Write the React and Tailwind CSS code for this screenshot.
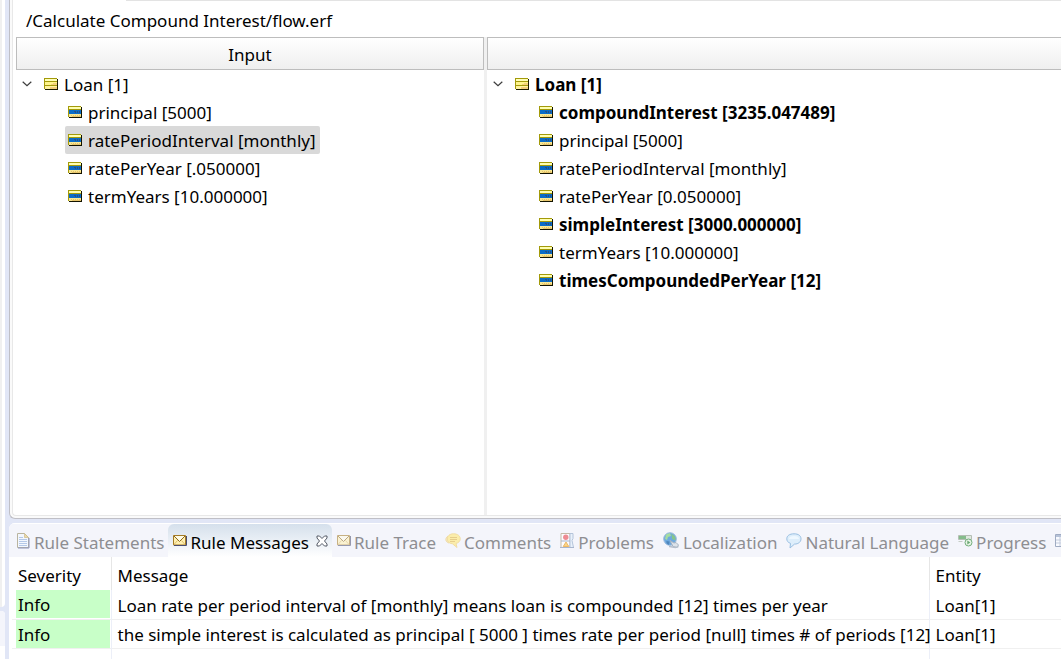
import React from "react";

function EntityIcon() {
  return (
    <svg width="14" height="12" viewBox="0 0 14 12" shapeRendering="crispEdges" className="shrink-0" aria-hidden="true">
      <path d="M1 1h13v11H1z" fill="#1c1c00" />
      <path d="M0 0h13v11H0z" fill="#a39a0a" />
      <path d="M1 1h12v2H1z" fill="#ffffb8" />
      <path d="M1 4h12v3H1z" fill="#fff58c" />
      <path d="M1 8h12v3H1z" fill="#fff3a0" />
      <path d="M7 6h6v1H7zM6 9h7v2H6zM9 5h4v1H9z" fill="#f3cf7c" />
    </svg>
  );
}

function AttributeIcon() {
  return (
    <svg width="14" height="12" viewBox="0 0 14 12" shapeRendering="crispEdges" className="shrink-0" aria-hidden="true">
      <path d="M1 1h13v11H1z" fill="#141400" />
      <path d="M0 0h13v11H0z" fill="#a39a0a" />
      <path d="M1 1h12v2H1z" fill="#ffffb0" />
      <path d="M1 4h12v4H1z" fill="#0a6cc8" />
      <path d="M6 5h2v1H6zM9 5h1v1H9zM11 5h1v1h-1zM7 6h1v1H7zM9 6h1v1H9zM11 6h1v1h-1z" fill="#2b4f80" />
      <path d="M1 8h12v3H1z" fill="#f8e794" />
      <path d="M3 9h1v1H3zM5 9h1v1H5zM7 9h1v1H7zM9 9h1v1H9zM11 9h1v1h-1zM4 10h9v1H4z" fill="#e6c46c" />
    </svg>
  );
}

function Chevron() {
  return (
    <svg width="10" height="6" viewBox="0 0 10 6" fill="none" stroke="#3c3c3c" strokeWidth="1.2" aria-hidden="true">
      <path d="M.7.8 5 4.8 9.3.8" />
    </svg>
  );
}

function PageIcon() {
  return (
    <svg width="14" height="16" viewBox="0 0 14 16" className="shrink-0" aria-hidden="true">
      <path d="M.5.500h7l4 4v10H.5z" fill="#f3f7fe" stroke="#b9b49f" />
      <path d="M12 5v10H1" fill="none" stroke="#8b94bd" />
      <path d="M7.500.5v4h4z" fill="#ecd9a8" stroke="#cdbb8c" strokeWidth=".7" />
      <path d="M2 4.500h4M2 6.500h8M2 8.500h8M2 10.500h8M2 12.500h8" stroke="#b4c8e8" />
    </svg>
  );
}

function MailIcon({ faded }) {
  return (
    <svg width="14" height="12" viewBox="0 0 14 12" className={faded ? "shrink-0 opacity-55" : "shrink-0"} aria-hidden="true">
      <path d="M.5.5h12v9.500H.5z" fill="#fff0b0" stroke="#a47b24" />
      <path d="M1 10.500h12.500V1" fill="none" stroke="#4a4e70" />
      <path d="M1 1l5.500 5.500L12 1" fill="#fffbe4" stroke="#8c6820" />
      <path d="M1 9.500l3.500-4M12 9.500l-3.500-4" fill="none" stroke="#d4b25c" strokeWidth=".8" />
    </svg>
  );
}

function CommentIcon() {
  return (
    <svg width="16" height="16" viewBox="0 0 16 16" className="shrink-0" aria-hidden="true">
      <path d="M3 3C0 5 0 9 4 10" fill="#f8ebc0" stroke="#ecd9a8" />
      <path d="M8.500.8c4 0 6.700 2 6.700 5 0 2.500-1.700 4-4.200 4.700l1 4-4.500-3.700C4 10.500 2.300 8.500 2.300 6 2.300 3 4.700.8 8.500.8z" fill="#fbedaa" stroke="#f0dca2" />
      <path d="M5 4.500h7M5 6.500h7M5 8.500h5" stroke="#e6cd8c" />
    </svg>
  );
}

function ProblemsIcon() {
  return (
    <svg width="15" height="16" viewBox="0 0 15 16" className="shrink-0" aria-hidden="true">
      <path d="M1 .5h9v14H1z" fill="#fdfcff" stroke="#c3b9a6" />
      <path d="M10 .5h3v5l-1 2 1.500 7H10z" fill="#e9f1fb" stroke="#b4c4da" />
      <path d="M1 8h9M0 14.500h14" stroke="#a8b5cd" />
      <circle cx="5.800" cy="4.300" r="2.700" fill="#ee8b92" />
      <path d="M6 9l2.800 4.500H3.200z" fill="#fad486" stroke="#edb865" />
    </svg>
  );
}

function GlobeIcon() {
  return (
    <svg width="17" height="17" viewBox="0 0 17 17" className="shrink-0" aria-hidden="true">
      <circle cx="7" cy="7" r="6.300" fill="#6da9df" stroke="#9bb9dc" />
      <path d="M3 2.500l4-1.500 1 3-3 1-1 3-2-1z" fill="#a5dca0" />
      <path d="M8.500 1.500l3.500 3 .7 4-3.700-1.500z" fill="#86c48c" />
      <path d="M3.500 9l3 .5-.5 3.500C4 12 3 11 3.500 9z" fill="#4f86bc" />
      <path d="M7 8.500l4 2.500 2-.5 2.500 2.500-1.500 2.500-4-1z" fill="#dde3ea" stroke="#a6b2c0" />
      <path d="M6 14.500c3-.5 6 2.500 9.500 0" fill="none" stroke="#b4bdca" strokeWidth="1.500" />
    </svg>
  );
}

function BubbleIcon() {
  return (
    <svg width="16" height="16" viewBox="0 0 16 16" className="shrink-0" aria-hidden="true">
      <path d="M8 .8c4.500 0 7 2 7 5s-2.500 5.300-6.500 5.300L4 15l.5-4.600C2 9.500.8 8 .8 5.800.8 2.800 3.500.8 8 .8z" fill="#deeefb" stroke="#9abfe1" />
      <path d="M3 6c0-2 2-3 5-3s5 1 5 3z" fill="#eff8ff" />
    </svg>
  );
}

function ProgressIcon() {
  return (
    <svg width="15" height="13" viewBox="0 0 15 13" className="shrink-0" aria-hidden="true">
      <path d="M.5 1.500h13v4H.5z" fill="#e0e8e0" stroke="#b4beb4" />
      <path d="M1 2h7v3H1z" fill="#85bc8b" />
      <path d="M.5 7.500h4" stroke="#c5cdc5" />
      <circle cx="10.500" cy="8.500" r="3.500" fill="#e7f5e6" stroke="#74ad7c" />
      <path d="M9.300 6.500v4l3-2z" fill="#6aa774" />
    </svg>
  );
}

function GridIcon() {
  return (
    <svg width="15" height="14" viewBox="0 0 15 14" className="shrink-0" aria-hidden="true">
      <path d="M.5.5h14v12H.5z" fill="#f8faff" stroke="#9fabc2" />
      <path d="M1 1h13v2H1z" fill="#b6c2d8" />
      <path d="M1 6h13M1 9h13M5 3v9M10 3v9" stroke="#c5cddd" />
    </svg>
  );
}

function CloseIcon() {
  return (
    <svg width="12" height="12" viewBox="0 0 12 12" fill="#fff" stroke="#555b66" strokeWidth="1" aria-hidden="true">
      <path d="M1 1h2.500L6 3.500 8.500 1H11v2L8.500 6 11 9v2H8.500L6 8.500 3.500 11H1V9l2.500-3L1 3z" />
    </svg>
  );
}

const inputAttributes = [
  { text: "principal [5000]" },
  { text: "ratePeriodInterval [monthly]", selected: true },
  { text: "ratePerYear [.050000]" },
  { text: "termYears [10.000000]" },
];

const outputAttributes = [
  { text: "compoundInterest [3235.047489]", bold: true },
  { text: "principal [5000]" },
  { text: "ratePeriodInterval [monthly]" },
  { text: "ratePerYear [0.050000]" },
  { text: "simpleInterest [3000.000000]", bold: true },
  { text: "termYears [10.000000]" },
  { text: "timesCompoundedPerYear [12]", bold: true },
];

function Tree({ label, bold, attributes }) {
  return (
    <div className="pl-[6px]">
      <div className="flex h-7 items-center">
        <button type="button" aria-label="Collapse Loan" className="mr-3 flex h-4 w-[10px] items-center">
          <Chevron />
        </button>
        <EntityIcon />
        <span className={bold ? "ml-[6px] pt-[2px] font-bold" : "ml-[6px] pt-[2px]"}>{label}</span>
      </div>
      <ul className="pl-[43px]">
        {attributes.map((a) => (
          <li key={a.text} className="flex">
            <button
              type="button"
              className={
                "flex h-7 items-center gap-[6px] rounded-[2px] pl-[3px] pr-1 whitespace-nowrap " +
                (a.selected ? "bg-[#d9d9d9] " : "") +
                (a.bold ? "font-bold" : "")
              }
            >
              <AttributeIcon />
              <span className="pt-[2px]">{a.text}</span>
            </button>
          </li>
        ))}
      </ul>
    </div>
  );
}

const tabs = [
  { label: "Rule Statements", icon: <PageIcon /> },
  { label: "Rule Messages", icon: <MailIcon />, active: true },
  { label: "Rule Trace", icon: <MailIcon faded /> },
  { label: "Comments", icon: <CommentIcon /> },
  { label: "Problems", icon: <ProblemsIcon /> },
  { label: "Localization", icon: <GlobeIcon /> },
  { label: "Natural Language", icon: <BubbleIcon /> },
  { label: "Progress", icon: <ProgressIcon /> },
];

const messages = [
  {
    severity: "Info",
    message: "Loan rate per period interval of [monthly] means loan is compounded [12] times per year",
    entity: "Loan[1]",
  },
  {
    severity: "Info",
    message: "the simple interest is calculated as principal [ 5000 ] times rate per period [null] times # of periods [12]",
    entity: "Loan[1]",
  },
];

const headerCell = "h-[33px] border border-[#bdbdbd] bg-linear-to-b from-white to-[#efefef] font-normal";

export default function App() {
  return (
    <div className="flex h-screen overflow-hidden bg-[#e1e6f6] font-['Noto_Sans','Open_Sans',sans-serif] text-[17px] leading-6 text-black">
      <div className="mr-1 flex w-[5px] shrink-0 flex-col gap-1">
        <div className="grow rounded-br-[4px] border-l-2 border-[#f0f0f0] bg-white" />
        <div className="h-12 overflow-hidden rounded-tr-[4px] bg-white">
          <div className="h-[35px] bg-[#f4f5fb]" />
        </div>
      </div>

      <div className="flex min-w-0 grow flex-col gap-1">
        <section className="flex min-h-0 grow flex-col rounded-bl-[6px] border-b border-l border-[#bfbfc6] bg-[#fafafa] pb-[2px] pl-[2px]">
          <div className="flex min-h-0 grow flex-col rounded-bl-[4px] border-b border-l border-[#e8e8e8] bg-white pl-[3px]">
            <div className="ml-[110px] h-[2px] border-t border-[#e3e3e3]" />
            <h1 className="flex h-[35px] items-center pl-[10px] pt-[2px] font-normal">/Calculate Compound Interest/flow.erf</h1>
            <div className="flex min-h-0 grow">
              <div className="w-[468px] shrink-0">
                <h2 className={headerCell + " flex items-center justify-center pt-[2px]"}>Input</h2>
                <Tree label="Loan [1]" attributes={inputAttributes} />
              </div>
              <div className="w-[3px] shrink-0 bg-[#f0f0f0]" />
              <div className="min-w-0 grow">
                <div className={headerCell + " border-r-0"} />
                <Tree label="Loan [1]" bold attributes={outputAttributes} />
              </div>
            </div>
          </div>
        </section>

        <section className="h-[136px] shrink-0 overflow-hidden rounded-tl-[6px] bg-white">
          <div role="tablist" className="flex h-[34px] border-t border-white bg-[#f4f5fb] pl-[3px] text-[#8e8e92]">
            {tabs.map((t) => (
              <div
                key={t.label}
                className={
                  "flex shrink-0 items-center gap-1 pl-[5px] pr-1 " +
                  (t.active ? "rounded-t-[6px] bg-linear-to-b from-[#d5e0ec] to-white text-black" : "")
                }
              >
                <button type="button" role="tab" aria-selected={!!t.active} className="flex items-center gap-[3px] whitespace-nowrap">
                  {t.icon}
                  <span className="pt-1">{t.label}</span>
                </button>
                {t.active && (
                  <button type="button" aria-label="Close Rule Messages" className="ml-[3px]">
                    <CloseIcon />
                  </button>
                )}
              </div>
            ))}
            <button type="button" role="tab" aria-selected="false" aria-label="Properties" className="shrink-0 pl-[5px]">
              <GridIcon />
            </button>
          </div>
          <table className="ml-[3px] w-full table-fixed border-collapse text-left">
            <colgroup>
              <col className="w-[99px]" />
              <col className="w-[818px]" />
              <col />
            </colgroup>
            <thead>
              <tr className="h-[33px]">
                <th className="border-r border-[#e6e6e6] pl-[6px] pt-1 font-normal">Severity</th>
                <th className="border-r border-[#e6e6e6] pl-[6px] pt-1 font-normal">Message</th>
                <th className="pl-[6px] pt-1 font-normal">Entity</th>
              </tr>
            </thead>
            <tbody>
              {messages.map((m) => (
                <tr key={m.message} className="h-[29px] border-b border-[#f0f0f0]">
                  <td className="border-r border-[#eceff8] p-0 pl-1 pr-px">
                    <div className="h-7 bg-[#c8ffc8] pl-[2px] pt-[3px]">{m.severity}</div>
                  </td>
                  <td className="border-r border-[#eceff8] p-0 pl-[6px] pt-[3px] whitespace-nowrap">{m.message}</td>
                  <td className="p-0 pl-[6px] pt-[3px]">{m.entity}</td>
                </tr>
              ))}
              <tr className="h-[29px]">
                <td className="border-r border-[#eceff8]" />
                <td className="border-r border-[#eceff8]" />
                <td />
              </tr>
            </tbody>
          </table>
        </section>
      </div>
    </div>
  );
}
